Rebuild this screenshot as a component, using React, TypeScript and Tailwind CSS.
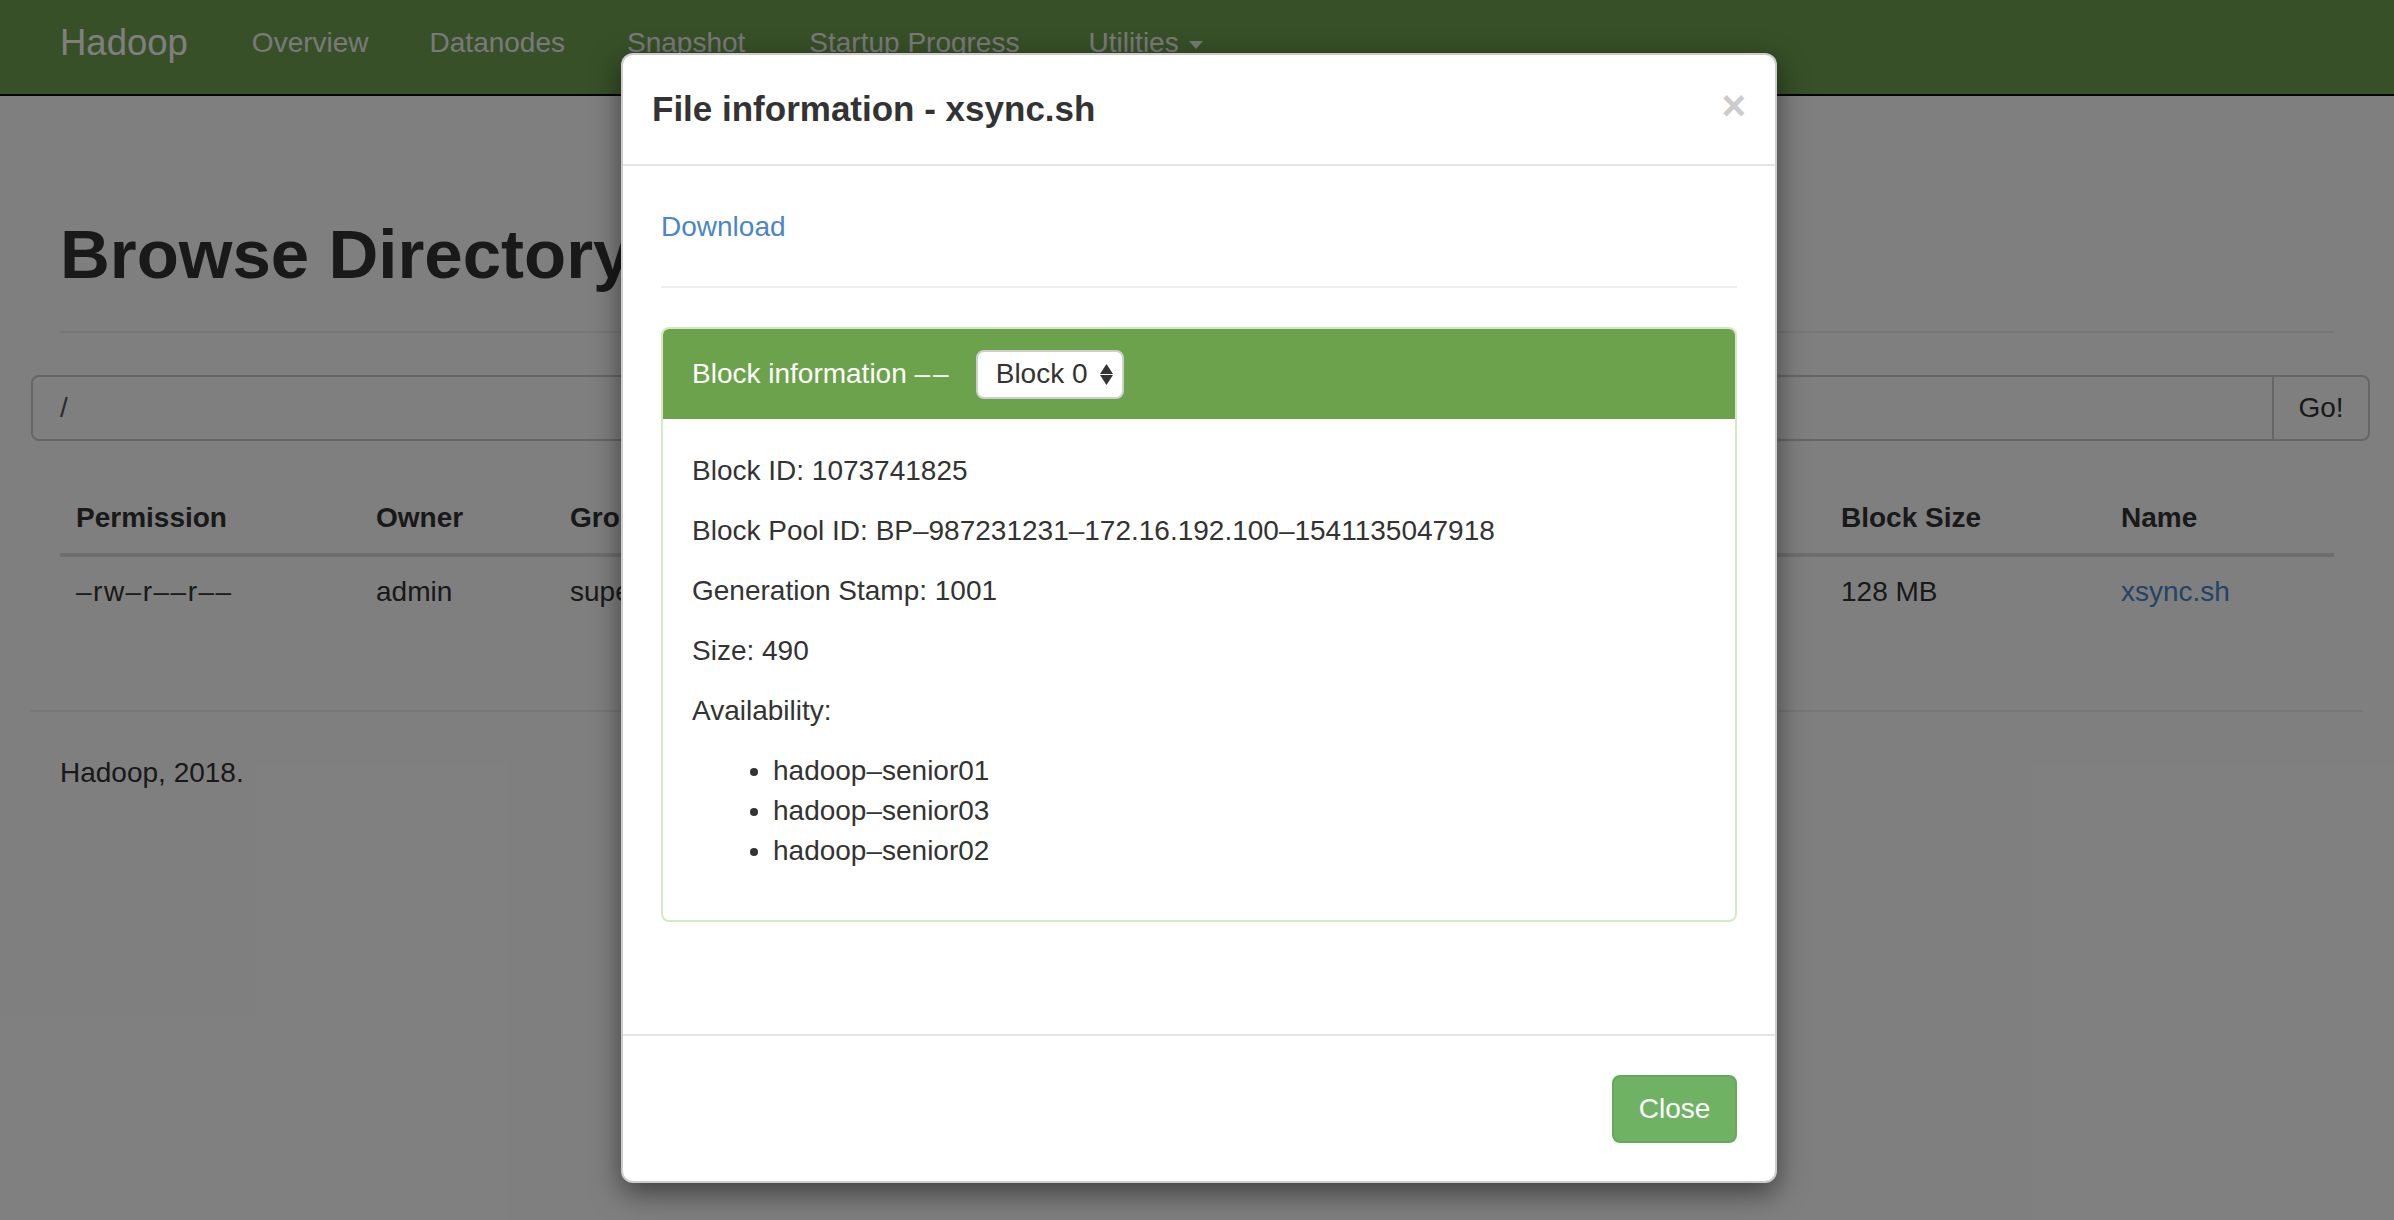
import React from "react";

const navLinks = [
  { label: "Overview", ml: "ml-[64px]" },
  { label: "Datanodes", ml: "ml-[61px]" },
  { label: "Snapshot", ml: "ml-[62px]" },
  { label: "Startup Progress", ml: "ml-[64px]" },
];

// the middle columns sit under the modal, so only their widths matter here
const columns = [
  { label: "Permission", w: "w-[300px]" },
  { label: "Owner", w: "w-[194px]" },
  { label: "Group", w: "w-[300px]" },
  { label: "", w: "w-[250px]" },
  { label: "", w: "w-[400px]" },
  { label: "", w: "w-[321px]" },
  { label: "Block Size", w: "w-[280px]" },
  { label: "Name", w: "w-[233px]" },
];

const row = ["–rw–r––r––", "admin", "supergroup", "", "", "", "128 MB", "xsync.sh"];

const hosts = ["hadoop–senior01", "hadoop–senior03", "hadoop–senior02"];

const SortArrows = () => (
  <svg width="13" height="21" viewBox="0 0 13 21" className="fill-[#333333]">
    <path d="M6.5 0 L13 10 L0 10 Z" />
    <path d="M0 11 L13 11 L6.5 21 Z" />
  </svg>
);

const Navbar = () => (
  <div className="h-[96px] bg-[#6ea04e] border-b-2 border-[#080808]">
    <div className="flex h-[94px] items-center pb-2 pl-[60px]">
      <span className="text-[36.5px] text-white">Hadoop</span>
      {navLinks.map((l) => (
        <span key={l.label} className={`${l.ml} text-[28px] text-[#f2f2f2]`}>
          {l.label}
        </span>
      ))}
      <span className="ml-[69px] flex items-center gap-[10px] text-[28px] text-[#f2f2f2]">
        Utilities
        <span className="mt-1 h-0 w-0 border-x-[7px] border-t-[8px] border-x-transparent border-t-[#f2f2f2]" />
      </span>
    </div>
  </div>
);

const BrowsePage = () => (
  <div>
    <div className="px-[60px]">
      <h1 className="mt-[121px] border-b-2 border-[#eeeeee] pb-[38px] text-[69px] font-bold leading-[76px] text-[#333333]">
        Browse Directory
      </h1>
    </div>

    <div className="ml-[31px] mr-[24px] mt-[42px] flex h-[66px] rounded-[8px] border-2 border-[#cccccc]">
      <div className="flex flex-1 items-center pl-[27px] text-[28px] text-[#555555]">/</div>
      <div className="flex w-[96px] items-center justify-center border-l-2 border-[#cccccc] text-[28px] text-[#333333]">
        Go!
      </div>
    </div>

    <div className="mx-[60px] mt-[42px]">
      <div className="flex border-b-4 border-[#dddddd]">
        {columns.map((c, i) => (
          <div key={i} className={`${c.w} shrink-0 px-[16px] py-[15px] text-[28px] font-bold leading-[40px] text-[#333333]`}>
            {c.label}
          </div>
        ))}
      </div>
      <div className="flex">
        {row.map((v, i) => (
          <div
            key={i}
            className={`${columns[i].w} shrink-0 px-[16px] py-[15px] text-[28px] leading-[40px] ${
              i === row.length - 1 ? "text-[#4a86c8]" : "text-[#333333]"
            } ${i === 0 ? "tracking-[1.5px]" : ""}`}
          >
            {v}
          </div>
        ))}
      </div>
    </div>

    <div className="mx-[31px] mt-[83px] border-t-2 border-[#eeeeee]" />
    <p className="mt-[41px] pl-[60px] text-[28px] leading-[40px] text-[#333333]">Hadoop, 2018.</p>
  </div>
);

const FileModal = () => (
  <div className="absolute inset-0 flex justify-center bg-black/50 pt-[53px]">
    <div className="ml-[4px] flex h-[1130px] w-[1156px] flex-col rounded-[12px] border-2 border-black/20 bg-white shadow-[0_10px_29px_rgba(0,0,0,0.5)]">
      <div className="flex h-[111px] shrink-0 items-center justify-between border-b-2 border-[#e5e5e5] pl-[29px] pr-[29px]">
        <h4 className="text-[35px] font-bold text-[#333333]">File information - xsync.sh</h4>
        <span className="-mt-2 text-[42px] font-bold leading-none text-[#cccccc]">×</span>
      </div>

      <div className="flex-1 px-[38px] pt-[41px]">
        <a className="text-[28px] leading-[40px] text-[#4a86c8]">Download</a>
        <div className="mt-[39px] border-t-2 border-[#eeeeee]" />

        <div className="mt-[39px] rounded-[8px] border-2 border-[#d6e9c6]">
          <div className="flex h-[90px] items-center rounded-t-[6px] bg-[#6da24c] px-[29px] text-[28px] text-white">
            <span>
              Block information <span className="tracking-[3px]">––</span>
            </span>
            <div className="ml-[24px] flex h-[49px] items-center gap-[12px] rounded-[8px] border-2 border-[#cfcfcf] bg-white pl-[18px] pr-[9px] text-[28px] text-[#333333]">
              <span>Block 0</span>
              <SortArrows />
            </div>
          </div>
          <div className="px-[29px] pt-[32px] pb-[30px] text-[28px] leading-[40px] text-[#333333]">
            <p className="mb-[20px]">Block ID: 1073741825</p>
            <p className="mb-[20px]">Block Pool ID: BP–987231231–172.16.192.100–1541135047918</p>
            <p className="mb-[20px]">Generation Stamp: 1001</p>
            <p className="mb-[20px]">Size: 490</p>
            <p className="mb-[20px]">Availability:</p>
            <ul className="mb-[19px] list-disc pl-[81px]">
              {hosts.map((h) => (
                <li key={h}>{h}</li>
              ))}
            </ul>
          </div>
        </div>
      </div>

      <div className="flex h-[147px] shrink-0 items-center justify-end border-t-2 border-[#e5e5e5] px-[38px]">
        <button className="h-[68px] w-[125px] rounded-[8px] border-2 border-[#66a95a] bg-[#6fb263] text-[28px] text-white">
          Close
        </button>
      </div>
    </div>
  </div>
);

export default function App() {
  return (
    <div className="relative h-[1220px] w-full overflow-hidden bg-white font-['Liberation_Sans',Arial,sans-serif]">
      <Navbar />
      <BrowsePage />
      <FileModal />
    </div>
  );
}
